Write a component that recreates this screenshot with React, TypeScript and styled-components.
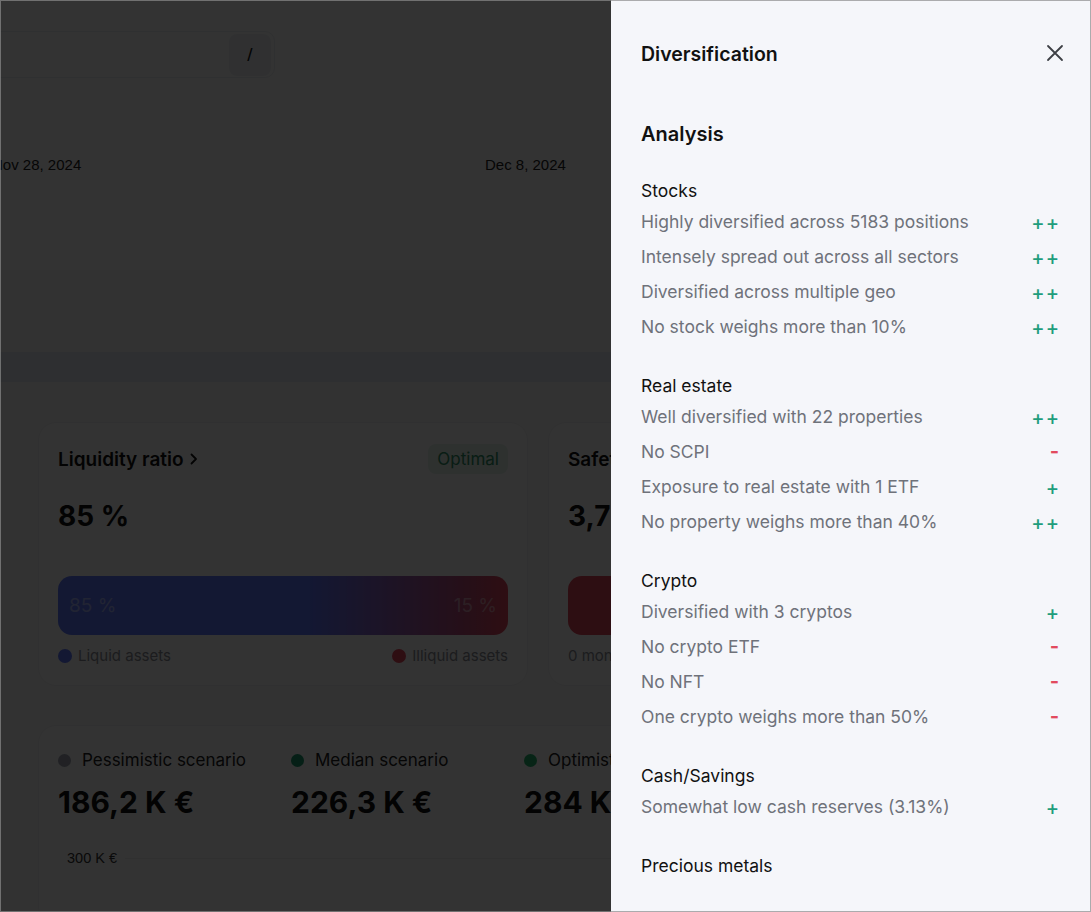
import React from "react";
import styled, { createGlobalStyle } from "styled-components";

const GlobalStyle = createGlobalStyle`
  * { box-sizing: border-box; }
  html, body { margin: 0; padding: 0; }
  body {
    width: 1091px;
    height: 912px;
    overflow: hidden;
    font-family: Inter, "Noto Sans", sans-serif;
    background: #fafafa;
    color: #111;
  }
`;

const Frame = styled.div`
  position: relative;
  width: 1091px;
  height: 912px;
  overflow: hidden;
  background: #fafafa;
  &::after {
    content: "";
    position: absolute;
    inset: 0;
    border: 1px solid rgba(140, 140, 140, 0.7);
    pointer-events: none;
  }
`;

const Page = styled.main`
  display: flex;
  flex-direction: column;
  width: 1091px;
`;

const ChartSection = styled.section`
  background: #ffffff;
  height: 270px;
  padding-top: 31px;
  display: flex;
  flex-direction: column;
`;

const SearchBox = styled.div`
  width: 306px;
  height: 47px;
  margin-left: -31px;
  border: 1px solid #eceef2;
  border-radius: 10px;
  background: #fff;
  display: flex;
  justify-content: flex-end;
  align-items: center;
  padding-right: 3px;
`;

const Kbd = styled.span`
  width: 42px;
  height: 42px;
  border-radius: 8px;
  background: #eef1f6;
  display: flex;
  align-items: center;
  justify-content: center;
  font-family: "Liberation Sans", Arial, sans-serif;
  font-size: 19px;
  color: #111;
`;

const AxisRow = styled.div`
  display: flex;
  margin-top: 77px;
  margin-left: -8px;
`;

const AxisLabel = styled.span`
  flex: 0 0 493px;
  font-family: "Liberation Sans", Arial, sans-serif;
  font-size: 15px;
  line-height: 20px;
  color: #222;
`;

const Spacer = styled.div<{ $h: number }>`
  height: ${(p) => p.$h}px;
`;

const InfoStrip = styled.div`
  height: 30px;
  background: #e4ecf6;
`;

const CardsRow = styled.div`
  display: flex;
  gap: 20px;
  padding-left: 38px;
  margin-top: 40px;
`;

const Card = styled.div<{ $w: number; $h: number }>`
  flex: 0 0 ${(p) => p.$w}px;
  height: ${(p) => p.$h}px;
  background: #ffffff;
  border-radius: 18px;
  border: 1px solid #f0f0f2;
  padding: 20px 19px;
  display: flex;
  flex-direction: column;
`;

const CardHead = styled.div`
  display: flex;
  justify-content: space-between;
  align-items: center;
  height: 33px;
`;

const CardTitle = styled.h3`
  margin: 0;
  font-size: 19px;
  font-weight: 600;
  color: #111;
  display: flex;
  align-items: center;
  gap: 4px;
  white-space: nowrap;
`;

const Badge = styled.span`
  background: #e3f4ec;
  color: #2d8f66;
  font-size: 17px;
  padding: 5px 9px;
  border-radius: 8px;
`;

const BigValue = styled.div`
  margin-top: 23px;
  font-size: 28px;
  font-weight: 700;
  line-height: 36px;
  color: #111;
  white-space: nowrap;
`;

const Bar = styled.div<{ $red?: boolean }>`
  margin-top: 42px;
  height: 60px;
  border-radius: 14px;
  background: ${(p) =>
    p.$red
      ? "#e0455a"
      : "linear-gradient(90deg, #5e78ff 0%, #5e78ff 55%, #c04a74 92%, #e5485d 100%)"};
  display: flex;
  justify-content: space-between;
  align-items: center;
  padding: 0 11px;
  font-size: 19px;
  color: rgba(255, 255, 255, 0.45);
`;

const Legend = styled.div`
  margin-top: 11px;
  display: flex;
  justify-content: space-between;
  font-size: 15px;
  color: #8b8e96;
  white-space: nowrap;
`;

const LegendItem = styled.span`
  display: flex;
  align-items: center;
  gap: 6px;
`;

const Dot = styled.span<{ $c: string; $s?: number }>`
  width: ${(p) => p.$s ?? 14}px;
  height: ${(p) => p.$s ?? 14}px;
  border-radius: 50%;
  background: ${(p) => p.$c};
  flex: 0 0 auto;
`;

const ScenarioCard = styled.div`
  margin-left: 38px;
  margin-top: 39px;
  width: 1000px;
  height: 200px;
  background: #fff;
  border-radius: 18px;
  border: 1px solid #f0f0f2;
  padding: 22px 19px;
`;

const ScenarioGrid = styled.div`
  display: grid;
  grid-template-columns: 233px 233px 233px;
`;

const Scenario = styled.div`
  display: flex;
  flex-direction: column;
  gap: 12px;
`;

const ScenarioLabel = styled.span`
  display: flex;
  align-items: center;
  gap: 11px;
  font-size: 17px;
  line-height: 24px;
  color: #222;
  white-space: nowrap;
`;

const ScenarioValue = styled.span`
  font-size: 30px;
  font-weight: 700;
  line-height: 36px;
  color: #111;
  white-space: nowrap;
`;

const GridLine = styled.div`
  margin-top: 30px;
  margin-left: 9px;
  display: flex;
  align-items: center;
  gap: 8px;
  font-family: "Liberation Sans", Arial, sans-serif;
  font-size: 14.5px;
  color: #333;
  &::after {
    content: "";
    flex: 1;
    height: 1px;
    background: #eee;
  }
`;

const Overlay = styled.div`
  position: absolute;
  inset: 0;
  background: rgba(0, 0, 0, 0.8);
`;

const Panel = styled.aside`
  position: absolute;
  top: 0;
  right: 0;
  bottom: 0;
  width: 480px;
  background: #f5f6fa;
  padding: 30px 31px 0 30px;
  display: flex;
  flex-direction: column;
`;

const PanelHeader = styled.header`
  display: flex;
  justify-content: space-between;
  align-items: center;
  height: 46px;
`;

const PanelTitle = styled.h2`
  margin: 0;
  padding-top: 1px;
  font-size: 19.5px;
  line-height: 28px;
  font-weight: 600;
  color: #111;
`;

const CloseButton = styled.button`
  border: none;
  background: transparent;
  padding: 0;
  width: 24px;
  height: 24px;
  margin-right: -7px;
  display: flex;
  align-items: center;
  justify-content: center;
  cursor: pointer;
`;

const AnalysisTitle = styled.h3`
  margin: 44px 0 0;
  font-size: 20px;
  line-height: 28px;
  font-weight: 600;
  color: #111;
`;

const Sections = styled.div`
  margin-top: 31px;
  display: flex;
  flex-direction: column;
  gap: 35px;
`;

const Section = styled.section`
  display: flex;
  flex-direction: column;
`;

const SectionTitle = styled.h4`
  margin: 0 0 7px;
  font-size: 17.5px;
  line-height: 24px;
  font-weight: 400;
  color: #111;
`;

const Items = styled.ul`
  list-style: none;
  margin: 0;
  padding: 0;
  display: flex;
  flex-direction: column;
  gap: 11px;
`;

const Item = styled.li`
  display: flex;
  justify-content: space-between;
  align-items: center;
  height: 24px;
  font-size: 17.5px;
  line-height: 24px;
  color: #6f727a;
`;

const Sign = styled.span<{ $neg?: boolean }>`
  font-size: 20px;
  line-height: 24px;
  font-weight: ${(p) => (p.$neg ? 700 : 500)};
  letter-spacing: 1px;
  color: ${(p) => (p.$neg ? "#e24a5e" : "#1f9d7c")};
  padding-top: ${(p) => (p.$neg ? "0" : "1px")};
  padding-bottom: ${(p) => (p.$neg ? "2px" : "0")};
`;

type Row = { text: string; sign: string };
const data: { title: string; rows: Row[] }[] = [
  {
    title: "Stocks",
    rows: [
      { text: "Highly diversified across 5183 positions", sign: "++" },
      { text: "Intensely spread out across all sectors", sign: "++" },
      { text: "Diversified across multiple geo", sign: "++" },
      { text: "No stock weighs more than 10%", sign: "++" },
    ],
  },
  {
    title: "Real estate",
    rows: [
      { text: "Well diversified with 22 properties", sign: "++" },
      { text: "No SCPI", sign: "-" },
      { text: "Exposure to real estate with 1 ETF", sign: "+" },
      { text: "No property weighs more than 40%", sign: "++" },
    ],
  },
  {
    title: "Crypto",
    rows: [
      { text: "Diversified with 3 cryptos", sign: "+" },
      { text: "No crypto ETF", sign: "-" },
      { text: "No NFT", sign: "-" },
      { text: "One crypto weighs more than 50%", sign: "-" },
    ],
  },
  {
    title: "Cash/Savings",
    rows: [{ text: "Somewhat low cash reserves (3.13%)", sign: "+" }],
  },
  { title: "Precious metals", rows: [] },
];

const CloseIcon = () => (
  <svg width="18" height="18" viewBox="0 0 18 18" fill="none">
    <path d="M2 2 L16 16 M16 2 L2 16" stroke="#3d3f45" strokeWidth="1.8" strokeLinecap="round" />
  </svg>
);

const Chevron = () => (
  <svg width="12" height="14" viewBox="0 0 12 14" fill="none">
    <path d="M3.5 2.5 L8 7 L3.5 11.5" stroke="#111" strokeWidth="1.8" strokeLinecap="round" strokeLinejoin="round" />
  </svg>
);

export default function App() {
  return (
    <>
      <GlobalStyle />
      <Frame>
        <Page>
          <ChartSection>
            <SearchBox>
              <Kbd>/</Kbd>
            </SearchBox>
            <AxisRow>
              <AxisLabel>Nov 28, 2024</AxisLabel>
              <AxisLabel>Dec 8, 2024</AxisLabel>
              <AxisLabel>Dec 18, 2024</AxisLabel>
            </AxisRow>
          </ChartSection>
          <Spacer $h={82} />
          <InfoStrip />
          <CardsRow>
            <Card $w={490} $h={264}>
              <CardHead>
                <CardTitle>
                  Liquidity ratio <Chevron />
                </CardTitle>
                <Badge>Optimal</Badge>
              </CardHead>
              <BigValue>85 %</BigValue>
              <Bar>
                <span>85 %</span>
                <span>15 %</span>
              </Bar>
              <Legend>
                <LegendItem>
                  <Dot $c="#5e78ff" />
                  Liquid assets
                </LegendItem>
                <LegendItem>
                  <Dot $c="#e5485d" />
                  Illiquid assets
                </LegendItem>
              </Legend>
            </Card>
            <Card $w={490} $h={264}>
              <CardHead>
                <CardTitle>Safety net</CardTitle>
              </CardHead>
              <BigValue>3,7 months</BigValue>
              <Bar $red>
                <span></span>
                <span></span>
              </Bar>
              <Legend>
                <LegendItem>0 months</LegendItem>
                <LegendItem>6 months</LegendItem>
              </Legend>
            </Card>
          </CardsRow>
          <ScenarioCard>
            <ScenarioGrid>
              <Scenario>
                <ScenarioLabel>
                  <Dot $c="#a3a6b4" $s={13} />
                  Pessimistic scenario
                </ScenarioLabel>
                <ScenarioValue>186,2 K €</ScenarioValue>
              </Scenario>
              <Scenario>
                <ScenarioLabel>
                  <Dot $c="#1c9a6e" $s={13} />
                  Median scenario
                </ScenarioLabel>
                <ScenarioValue>226,3 K €</ScenarioValue>
              </Scenario>
              <Scenario>
                <ScenarioLabel>
                  <Dot $c="#26b56e" $s={13} />
                  Optimistic scenario
                </ScenarioLabel>
                <ScenarioValue>284 K €</ScenarioValue>
              </Scenario>
            </ScenarioGrid>
            <GridLine>300 K €</GridLine>
          </ScenarioCard>
        </Page>
        <Overlay />
        <Panel>
          <PanelHeader>
            <PanelTitle>Diversification</PanelTitle>
            <CloseButton aria-label="Close">
              <CloseIcon />
            </CloseButton>
          </PanelHeader>
          <AnalysisTitle>Analysis</AnalysisTitle>
          <Sections>
            {data.map((s) => (
              <Section key={s.title}>
                <SectionTitle>{s.title}</SectionTitle>
                {s.rows.length > 0 && (
                  <Items>
                    {s.rows.map((r) => (
                      <Item key={r.text}>
                        <span>{r.text}</span>
                        <Sign $neg={r.sign === "-"}>{r.sign}</Sign>
                      </Item>
                    ))}
                  </Items>
                )}
              </Section>
            ))}
          </Sections>
        </Panel>
      </Frame>
    </>
  );
}
